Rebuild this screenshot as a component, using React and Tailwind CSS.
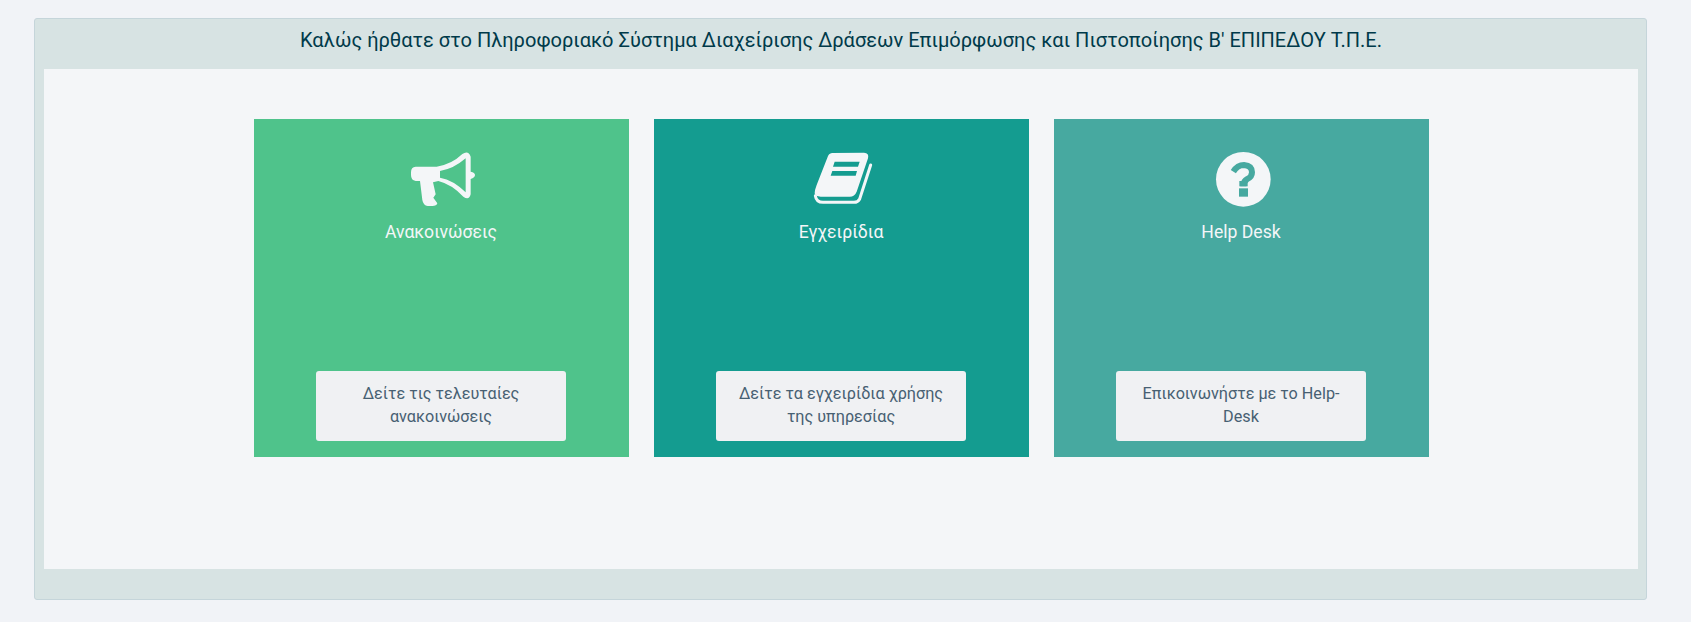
import React from 'react';

function Megaphone() {
  return (
    <svg viewBox="-3 0 225 195" className="w-[75px] h-[65px]">
      <path
        fill="#f4f6f8"
        fillRule="evenodd"
        d="M32 65 L95 65 Q140 58 172 27 Q190 15 197 35 L197 80 Q210 82 210 90 Q210 98 197 102 L197 148 Q192 168 175 155 Q140 118 100 108 L84 112 L92 148 L85 158 L97 175 Q95 183 82 183 L68 183 Q55 182 52 165 L45 108 L32 108 Q18 106 18 90 L18 82 Q18 66 32 65 Z M105 78 Q145 72 182 40 L182 142 Q145 105 105 98 Z"
      />
    </svg>
  );
}

function Book() {
  return (
    <svg viewBox="-12 0 225 195" className="w-[75px] h-[65px]">
      <path
        fill="#f4f6f8"
        fillRule="evenodd"
        d="M72 24 L168 23 Q184 24 180 40 L146 140 Q140 155 125 155 L38 155 Q22 155 20 145 Q20 135 26 120 L58 38 Q62 25 72 24 Z M80 50 L155 50 L150 65 L75 65 Z M73 78 L147 78 L143 92 L68 92 Z"
      />
      <path
        fill="none"
        stroke="#f4f6f8"
        strokeWidth="9"
        strokeLinecap="round"
        d="M188 60 L155 162 Q150 172 138 172 L45 172 Q25 172 22 152"
      />
    </svg>
  );
}

function Question({ color }) {
  return (
    <svg viewBox="-12 0 225 195" className="w-[75px] h-[65px]">
      <circle cx="106" cy="103" r="82" fill="#f4f6f8" />
      <path
        fill="none"
        stroke={color}
        strokeWidth="18"
        d="M76 80 Q88 60 108 60 Q132 62 132 82 Q132 96 118 102 Q106 108 106 124"
      />
      <rect x="94" y="108" width="25" height="16" fill={color} />
      <rect x="93" y="130" width="27" height="25" fill={color} />
    </svg>
  );
}

const cards = [
  {
    title: 'Ανακοινώσεις',
    action: 'Δείτε τις τελευταίες ανακοινώσεις',
    bg: 'bg-[#4fc38b]',
    icon: <Megaphone />,
  },
  {
    title: 'Εγχειρίδια',
    action: 'Δείτε τα εγχειρίδια χρήσης της υπηρεσίας',
    bg: 'bg-[#149c90]',
    icon: <Book />,
  },
  {
    title: 'Help Desk',
    action: 'Επικοινωνήστε με το Help-Desk',
    bg: 'bg-[#47a9a0]',
    icon: <Question color="#47a9a0" />,
  },
];

export default function App() {
  return (
    <div className="min-h-screen bg-[#f1f3f7] pl-[34px] pr-[44px] pt-[18px] pb-[22px] font-['Roboto',sans-serif]">
      <div className="bg-[#d7e3e3] border border-[#c5d5da] rounded-[3px] pl-[9px] pr-[8px] pb-[30px]">
        <h1 className="h-[50px] pt-[6px] text-center text-[20.04px] leading-[30px] font-normal text-[#003a4a]">
          Καλώς ήρθατε στο Πληροφοριακό Σύστημα Διαχείρισης Δράσεων Επιμόρφωσης και Πιστοποίησης Β' ΕΠΙΠΕΔΟΥ Τ.Π.Ε.
        </h1>
        <div className="bg-[#f4f6f8] pt-[50px] pb-[112px] flex justify-center gap-[25px]">
          {cards.map((c) => (
            <div key={c.title} className={`${c.bg} w-[375px] h-[338px] flex flex-col items-center pt-[26px] pb-[16px]`}>
              <div className="h-[65px] flex items-start justify-center">{c.icon}</div>
              <div className="mt-[9px] text-[17.6px] leading-[26px] text-[#f4f6f8]">{c.title}</div>
              <button className="mt-auto w-[250px] h-[70px] px-[20px] bg-[#f0f1f3] rounded-[3px] text-[16.2px] leading-[22.7px] text-[#476072] text-center">
                {c.action}
              </button>
            </div>
          ))}
        </div>
      </div>
    </div>
  );
}
